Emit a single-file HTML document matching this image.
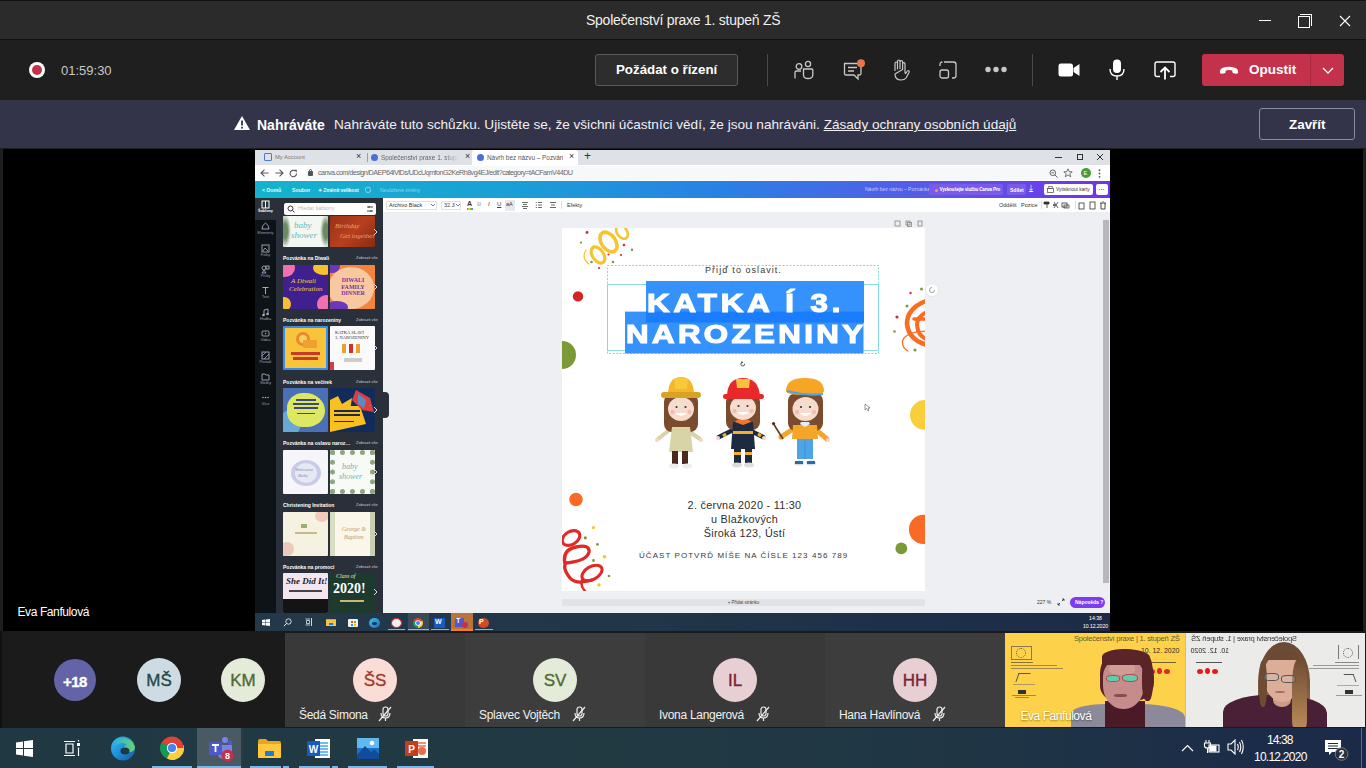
<!DOCTYPE html>
<html><head><meta charset="utf-8">
<style>
*{margin:0;padding:0;box-sizing:border-box}
html,body{width:1366px;height:768px;overflow:hidden;background:#1e1e1e;font-family:"Liberation Sans",sans-serif}
.a{position:absolute}
#title{left:0;top:0;width:1366px;height:40px;background:#2b2b2b;border-top:1px solid #111;border-bottom:1px solid #111}
#tool{left:0;top:40px;width:1366px;height:60px;background:#1f1f1f}
#banner{left:0;top:100px;width:1366px;height:48px;background:#33344a}
#stage{left:3px;top:149px;width:1360px;height:482px;background:#000}
#prow{left:0;top:631px;width:1366px;height:97px;background:#1b1b1b}
#taskbar{left:0;top:728px;width:1366px;height:40px;background:linear-gradient(90deg,#1f3842 0%,#213a42 45%,#1f3545 72%,#1c2d48 90%,#1b2a48 100%)}
.t{white-space:nowrap;color:#fff}
.av{border-radius:50%;display:flex;align-items:center;justify-content:center;font-family:"Liberation Sans",sans-serif;padding-top:2px;-webkit-text-stroke:0.35px currentColor}
.nm{font-size:12px;color:#f0f0f0;letter-spacing:-0.3px}
</style></head><body>
<!-- title bar -->
<div id="title" class="a">
  <div class="a t" style="left:586px;top:11px;font-size:14px;letter-spacing:-0.26px;color:#f0f0f0">Společenství praxe 1. stupeň ZŠ</div>
  <div class="a" style="left:1259px;top:19px;width:12px;height:1px;background:#fff"></div>
  <div class="a" style="left:1300px;top:13px;width:12px;height:12px;border:1px solid #fff;border-left:none;border-bottom:none"></div>
  <div class="a" style="left:1298px;top:15px;width:12px;height:12px;border:1px solid #fff;background:#2b2b2b"></div>
  <svg class="a" style="left:1339px;top:14px" width="12" height="12"><path d="M1 1L11 11M11 1L1 11" stroke="#fff" stroke-width="1.1"/></svg>
</div>
<!-- toolbar -->
<div id="tool" class="a">
  <div class="a" style="left:29px;top:22px;width:16px;height:16px;border-radius:50%;background:#fff"></div>
  <div class="a" style="left:31.8px;top:24.8px;width:10.4px;height:10.4px;border-radius:50%;background:#c4314b"></div>
  <div class="a t" style="left:61px;top:23px;font-size:13px;color:#c8c8c8">01:59:30</div>
  <div class="a" style="left:595px;top:14px;width:143px;height:32px;border:1px solid #5a5a5a;border-radius:3px;background:#2d2d2d"></div>
  <div class="a t" style="left:616px;top:22px;font-size:13.3px;font-weight:bold">Požádat o řízení</div>
  <div class="a" style="left:767px;top:14px;width:1px;height:32px;background:#4a4a4a"></div>
  <div class="a" style="left:1032px;top:14px;width:1px;height:32px;background:#4a4a4a"></div>
  <div class="a" style="left:1202px;top:14px;width:142px;height:32px;border-radius:3px;background:#c4314b"></div>
  <div class="a" style="left:1310px;top:14px;width:1px;height:32px;background:#a92a40"></div>
  <div class="a t" style="left:1249px;top:22px;font-size:13.5px;font-weight:bold">Opustit</div>
  <!-- toolbar icons -->
  <svg class="a" style="left:794px;top:20px" width="20" height="20" viewBox="0 0 20 20"><circle cx="5" cy="6.5" r="2.8" fill="none" stroke="#c8c8c8" stroke-width="1.3"/><circle cx="14" cy="4" r="2.6" fill="none" stroke="#c8c8c8" stroke-width="1.3"/><path d="M1 18.5V12.5Q1 11 2.5 11H7" fill="none" stroke="#c8c8c8" stroke-width="1.3"/><path d="M9.5 9H18Q18.8 9 18.8 10V15Q18.8 18.5 14 18.5Q9.5 18.5 9.5 15Z" fill="none" stroke="#c8c8c8" stroke-width="1.3"/></svg>
  <svg class="a" style="left:843px;top:19px" width="24" height="22" viewBox="0 0 24 22"><path d="M1.5 4.5H16.5Q18 4.5 18 6V14.5Q18 16 16.5 16H15V20L11 16H3Q1.5 16 1.5 14.5Z" fill="none" stroke="#c8c8c8" stroke-width="1.3"/><path d="M5 8.5H14M5 12H11" stroke="#c8c8c8" stroke-width="1.3"/><circle cx="18" cy="4.2" r="4" fill="#e97548"/></svg>
  <svg class="a" style="left:890px;top:19px" width="20" height="22" viewBox="0 0 20 22"><path d="M5 12V4.5Q5 3 6.3 3Q7.5 3 7.5 4.5V10.5M7.5 10V2.5Q7.5 1 8.8 1Q10 1 10 2.5V10M10 10V3Q10 1.6 11.3 1.6Q12.6 1.6 12.6 3V10.5M12.6 10.5V5Q12.6 3.6 13.8 3.6Q15 3.6 15 5V13Q15 15 16 14Q17.5 11.5 18.5 11.5Q19.6 12 19 13.5L16 19Q14.5 21 11 21Q5 21 5 15Z" fill="none" stroke="#c8c8c8" stroke-width="1.2" stroke-linejoin="round"/></svg>
  <svg class="a" style="left:939px;top:21px" width="18" height="18" viewBox="0 0 18 18"><path d="M5 1H14.5Q17 1 17 3.5V14.5Q17 17 14.5 17H13" fill="none" stroke="#c8c8c8" stroke-width="1.3"/><path d="M1 5V3.5Q1 1 3.5 1" fill="none" stroke="#c8c8c8" stroke-width="1.3"/><rect x="1" y="9" width="8.5" height="8" rx="2" fill="none" stroke="#c8c8c8" stroke-width="1.3"/></svg>
  <svg class="a" style="left:985px;top:26px" width="22" height="7" viewBox="0 0 22 7"><circle cx="3" cy="3.5" r="2.7" fill="#c8c8c8"/><circle cx="11" cy="3.5" r="2.7" fill="#c8c8c8"/><circle cx="19" cy="3.5" r="2.7" fill="#c8c8c8"/></svg>
  <svg class="a" style="left:1058px;top:23px" width="22" height="14" viewBox="0 0 22 14"><rect x="0.5" y="0.5" width="14.5" height="13" rx="2.5" fill="#fff"/><path d="M15.5 5L21.5 1V13L15.5 9Z" fill="#fff"/></svg>
  <svg class="a" style="left:1109px;top:19px" width="16" height="22" viewBox="0 0 16 22"><rect x="4" y="0.5" width="8" height="13.5" rx="4" fill="#fff"/><path d="M1 10Q1 17 8 17Q15 17 15 10M8 17V21" fill="none" stroke="#fff" stroke-width="1.4"/></svg>
  <svg class="a" style="left:1154px;top:21px" width="22" height="19" viewBox="0 0 22 19"><path d="M6 15.5H3Q1 15.5 1 13.5V3Q1 1 3 1H19Q21 1 21 3V13.5Q21 15.5 19 15.5H16" fill="none" stroke="#fff" stroke-width="1.4"/><path d="M11 18.5V7M6.5 11L11 6.5L15.5 11" fill="none" stroke="#fff" stroke-width="1.8"/></svg>
  <svg class="a" style="left:1219px;top:26px" width="20" height="9" viewBox="0 0 20 9"><path d="M1 6.5Q0.5 3 4 1.7Q10 -0.3 16 1.7Q19.5 3 19 6.5Q18.8 8 17.3 7.8L14.5 7.3Q13.2 7 13.3 5.5L13.4 4.5Q10 3.6 6.6 4.5L6.7 5.5Q6.8 7 5.5 7.3L2.7 7.8Q1.2 8 1 6.5Z" fill="#fff"/></svg>
  <svg class="a" style="left:1322px;top:27px" width="12" height="7" viewBox="0 0 12 7"><path d="M1 1L6 6L11 1" fill="none" stroke="#fff" stroke-width="1.3"/></svg>

</div>
<!-- banner -->
<div id="banner" class="a">
  <svg class="a" style="left:234px;top:16px" width="16" height="14"><path d="M8 0L16 14H0Z" fill="#fff"/><rect x="7.1" y="4.5" width="1.8" height="5" fill="#33344a"/><rect x="7.1" y="10.8" width="1.8" height="1.8" fill="#33344a"/></svg>
  <div class="a t" style="left:257px;top:17px;font-size:14px;font-weight:bold">Nahráváte</div>
  <div class="a t" style="left:334px;top:17px;font-size:13.6px;color:#f0f0f0">Nahráváte tuto schůzku. Ujistěte se, že všichni účastníci vědí, že jsou nahráváni. <span style="text-decoration:underline">Zásady ochrany osobních údajů</span></div>
  <div class="a" style="left:1259px;top:8px;width:96px;height:32px;border:1px solid #8a8aa0;border-radius:3px"></div>
  <div class="a t" style="left:1289px;top:17px;font-size:13.4px;font-weight:bold">Zavřít</div>
</div>
<!-- stage -->
<div id="stage" class="a">
  <div class="a t" style="left:14.5px;top:456px;font-size:12px;letter-spacing:-0.4px">Eva Fanfulová</div>
</div>
<div id="screen" class="a" style="left:255px;top:150px;width:855px;height:481px;background:#eeeff3;overflow:hidden">
  <!-- chrome tabs -->
  <div class="a" style="left:0;top:0;width:855px;height:15px;background:#dee1e6"></div>
  <div class="a" style="left:217px;top:0;width:106px;height:15px;background:#fff;border-radius:3px 3px 0 0"></div>
  <div class="a" style="left:112px;top:3px;width:1px;height:9px;background:#9aa0a6"></div>
  <div class="a" style="left:9px;top:3px;width:8px;height:8px;border:1.3px solid #4a7bd0;border-radius:1px"></div>
  <div class="a t" style="left:20px;top:3.5px;font-size:5.8px;color:#777">My Account</div>
  <div class="a t" style="left:101px;top:1px;font-size:9px;color:#333">×</div>
  <div class="a" style="left:115.5px;top:4px;width:7px;height:7px;border-radius:50%;background:#4a6fd8"></div>
  <div class="a t" style="left:126px;top:3.5px;width:78px;overflow:hidden;font-size:6.4px;color:#5f6368;-webkit-mask-image:linear-gradient(90deg,#000 80%,transparent)">Společenství praxe 1. stupeň ZŠ</div>
  <div class="a t" style="left:210px;top:1px;font-size:9px;color:#333">×</div>
  <div class="a" style="left:222px;top:4px;width:7px;height:7px;border-radius:50%;background:#4a6fd8"></div>
  <div class="a t" style="left:232px;top:3.5px;width:76px;overflow:hidden;font-size:6.4px;color:#555">Návrh bez názvu – Pozvánka</div>
  <div class="a t" style="left:314px;top:1px;font-size:9px;color:#333">×</div>
  <div class="a t" style="left:329px;top:-1px;font-size:12px;color:#333">+</div>
  <div class="a" style="left:800px;top:7px;width:7px;height:1px;background:#333"></div>
  <div class="a" style="left:822px;top:4px;width:6px;height:6px;border:1px solid #333"></div>
  <svg class="a" style="left:841px;top:3px" width="8" height="8"><path d="M1 1L7 7M7 1L1 7" stroke="#333" stroke-width="1"/></svg>
  <!-- address bar -->
  <div class="a" style="left:0;top:15px;width:855px;height:16px;background:#fff"></div>
  <div class="a" style="left:50px;top:16px;width:790px;height:14px;border-radius:7px;background:#f7f8f9"></div>
  <svg class="a" style="left:5px;top:19px" width="9" height="8"><path d="M8.5 4H1M4.5 0.7L1 4L4.5 7.3" fill="none" stroke="#555" stroke-width="1.1"/></svg>
  <svg class="a" style="left:20px;top:19px" width="9" height="8"><path d="M0.5 4H8M4.5 0.7L8 4L4.5 7.3" fill="none" stroke="#555" stroke-width="1.1"/></svg>
  <svg class="a" style="left:34px;top:18.5px" width="9" height="9"><path d="M7.5 4.5A3.2 3.2 0 1 1 6.3 2" fill="none" stroke="#555" stroke-width="1.1"/><path d="M5 0.8H7.8V3.6Z" fill="#555"/></svg>
  <div class="a" style="left:53px;top:21px;width:5px;height:4.5px;background:#555;border-radius:1px"></div><div class="a" style="left:54px;top:18.5px;width:3px;height:4px;border:0.8px solid #555;border-radius:1.5px 1.5px 0 0"></div>
  <div class="a t" style="left:63px;top:18px;font-size:7.2px;color:#6a6a6a;letter-spacing:-0.55px">canva.com/design/DAEP64iVtDs/UDcUqmfonG2KeRh8vg4EJ/edit?category=tACFamV44DU</div>
  <svg class="a" style="left:794px;top:18.5px" width="9" height="9"><circle cx="3.8" cy="3.8" r="2.8" fill="none" stroke="#555" stroke-width="0.9"/><path d="M5.8 5.8L8.5 8.5M2.5 3.8H5.1" stroke="#555" stroke-width="0.9"/></svg>
  <svg class="a" style="left:808px;top:18px" width="10" height="10"><path d="M5 0.8L6.2 3.7L9.2 3.8L6.8 5.7L7.7 8.8L5 7L2.3 8.8L3.2 5.7L0.8 3.8L3.8 3.7Z" fill="none" stroke="#555" stroke-width="0.8"/></svg>
  <svg class="a" style="left:843px;top:18.5px" width="3" height="9"><circle cx="1.5" cy="1.2" r="0.9" fill="#555"/><circle cx="1.5" cy="4.5" r="0.9" fill="#555"/><circle cx="1.5" cy="7.8" r="0.9" fill="#555"/></svg>
  <div class="a" style="left:825.5px;top:18px;width:10px;height:10px;border-radius:50%;background:#4a9a3a"></div><div class="a t" style="left:828.5px;top:19.5px;font-size:5.5px;color:#fff">E</div>
  <!-- canva header -->
  <div class="a" style="left:0;top:31px;width:855px;height:17px;background:linear-gradient(90deg,#15b3cc 0%,#1a9fd6 30%,#2a80e4 55%,#5a58e8 80%,#7233ea 100%)"></div>
  <div class="a t" style="left:7px;top:37px;font-size:5.2px;color:#e8f8ff;font-weight:bold">&lt; Domů</div>
  <div class="a t" style="left:37px;top:37px;font-size:5.2px;color:#e8f8ff;font-weight:bold">Soubor</div>
  <div class="a t" style="left:63px;top:37px;font-size:5.2px;color:#e8f8ff;font-weight:bold;letter-spacing:-0.15px">✦ Změnit velikost</div><svg class="a" style="left:109px;top:36px" width="8" height="7"><path d="M1.5 4A2.5 2.5 0 0 1 6.5 3M6.5 3.5A2.5 2.5 0 0 1 1.5 4.5" fill="none" stroke="#a8e4f4" stroke-width="0.8"/></svg>
  <div class="a t" style="left:125px;top:37px;font-size:5px;color:#8fd8ec">Neuložené změny</div>
  <div class="a t" style="left:610px;top:36px;font-size:5px;color:#c8d0ff">Návrh bez názvu – Pozvánka</div>
  <div class="a" style="left:674px;top:34px;width:74px;height:11px;border-radius:2px;background:#7a5ae8"></div>
  <div class="a" style="left:679.5px;top:38.5px;width:3px;height:3px;border-radius:50%;background:#f8a030"></div><div class="a t" style="left:684.5px;top:36.5px;font-size:4.6px;letter-spacing:-0.2px;color:#fff;font-weight:bold">Vyzkoušejte službu Canva Pro</div>
  <div class="a" style="left:752px;top:34px;width:19px;height:11px;border-radius:2px;background:#7a5ae8"></div>
  <div class="a t" style="left:755px;top:36.5px;font-size:5px;color:#fff;font-weight:bold">Sdílet</div>
  <div class="a t" style="left:774px;top:33px;font-size:9px;color:#fff">⤓</div>
  <div class="a" style="left:789px;top:34px;width:49px;height:11px;border-radius:2px;background:#fff"></div>
  <svg class="a" style="left:792px;top:36px" width="7" height="7"><rect x="0.5" y="2.5" width="6" height="4" fill="none" stroke="#444" stroke-width="0.7"/><rect x="1.8" y="0.5" width="3.4" height="2" fill="none" stroke="#444" stroke-width="0.6"/></svg><div class="a t" style="left:801px;top:36.5px;font-size:4.8px;color:#333">Vytisknout karty</div>
  <div class="a" style="left:841px;top:34px;width:12px;height:11px;border-radius:2px;background:#fff"></div>
  <div class="a t" style="left:843.5px;top:35.5px;font-size:6px;color:#555;font-weight:bold">···</div>
  <!-- left icon bar -->
  <div class="a" style="left:0;top:48px;width:21px;height:415px;background:#0e1318"></div>
  <div class="a" style="left:0;top:48px;width:21px;height:22px;background:#293039"></div>
  <!-- side panel -->
  <div class="a" style="left:21px;top:48px;width:107px;height:415px;background:#293039"></div>
  <div class="a" style="left:128px;top:242px;width:6px;height:26px;background:#293039;border-radius:0 4px 4px 0"></div>
  <!-- icon bar -->
<svg class="a" style="left:6px;top:50.0px" width="9" height="9"><rect x="1" y="1" width="7" height="7" fill="none" stroke="#fff" stroke-width="1"/><path d="M4.5 1V8" stroke="#fff"/></svg><div class="a t" style="left:0;width:21px;text-align:center;top:59.0px;font-size:3.8px;color:#fff;font-weight:bold">Šablony</div>
<svg class="a" style="left:6px;top:72.0px" width="9" height="9"><path d="M1 7Q1 3 4.5 1Q8 3 8 7Z" fill="none" stroke="#aab" stroke-width="0.9"/></svg><div class="a t" style="left:0;width:21px;text-align:center;top:81.0px;font-size:3.8px;color:#9aa0aa;font-weight:normal">Elementy</div>
<svg class="a" style="left:6px;top:94.0px" width="9" height="9"><rect x="1" y="1" width="7" height="7" fill="none" stroke="#aab" stroke-width="0.9"/><path d="M2 7L4 4L7 7" fill="none" stroke="#aab" stroke-width="0.8"/></svg><div class="a t" style="left:0;width:21px;text-align:center;top:103.0px;font-size:3.8px;color:#9aa0aa;font-weight:normal">Fotky</div>
<svg class="a" style="left:6px;top:115.0px" width="9" height="9"><circle cx="3" cy="3" r="2" fill="none" stroke="#aab" stroke-width="0.9"/><rect x="5" y="1" width="3" height="3" fill="none" stroke="#aab" stroke-width="0.9"/><path d="M1 8L3 5L5 8Z" fill="none" stroke="#aab" stroke-width="0.9"/></svg><div class="a t" style="left:0;width:21px;text-align:center;top:124.0px;font-size:3.8px;color:#9aa0aa;font-weight:normal">Prvky</div>
<svg class="a" style="left:6px;top:135.5px" width="9" height="9"><path d="M1.5 1.5H7.5M4.5 1.5V8" stroke="#aab" stroke-width="1"/></svg><div class="a t" style="left:0;width:21px;text-align:center;top:144.5px;font-size:3.8px;color:#9aa0aa;font-weight:normal">Text</div>
<svg class="a" style="left:6px;top:157.6px" width="9" height="9"><path d="M3 7V2L7 1V6" fill="none" stroke="#aab" stroke-width="0.9"/><circle cx="2.5" cy="7" r="1.3" fill="#aab"/><circle cx="6.5" cy="6" r="1.3" fill="#aab"/></svg><div class="a t" style="left:0;width:21px;text-align:center;top:166.6px;font-size:3.8px;color:#9aa0aa;font-weight:normal">Hudba</div>
<svg class="a" style="left:6px;top:179.0px" width="9" height="9"><rect x="1" y="2" width="7" height="5" rx="1" fill="none" stroke="#aab" stroke-width="0.9"/><path d="M4 3.5L5.5 4.5L4 5.5Z" fill="#aab"/></svg><div class="a t" style="left:0;width:21px;text-align:center;top:188.0px;font-size:3.8px;color:#9aa0aa;font-weight:normal">Videa</div>
<svg class="a" style="left:6px;top:200.5px" width="9" height="9"><rect x="1" y="1" width="7" height="7" fill="none" stroke="#aab" stroke-width="0.9"/><path d="M1 5L5 1M3 8L8 3" stroke="#aab" stroke-width="0.8"/></svg><div class="a t" style="left:0;width:21px;text-align:center;top:209.5px;font-size:3.8px;color:#9aa0aa;font-weight:normal">Pozadí</div>
<svg class="a" style="left:6px;top:222.0px" width="9" height="9"><path d="M1 2H4L5 3H8V8H1Z" fill="none" stroke="#aab" stroke-width="0.9"/></svg><div class="a t" style="left:0;width:21px;text-align:center;top:231.0px;font-size:3.8px;color:#9aa0aa;font-weight:normal">Složky</div>
<svg class="a" style="left:6px;top:243.0px" width="9" height="9"><circle cx="2" cy="4.5" r="0.8" fill="#aab"/><circle cx="4.5" cy="4.5" r="0.8" fill="#aab"/><circle cx="7" cy="4.5" r="0.8" fill="#aab"/></svg><div class="a t" style="left:0;width:21px;text-align:center;top:252.0px;font-size:3.8px;color:#9aa0aa;font-weight:normal">Více</div>
<!-- panel content -->
  <div class="a" style="left:29px;top:53px;width:92px;height:12px;background:#fff;border-radius:2px"></div>
  <svg class="a" style="left:32px;top:55px" width="8" height="8"><circle cx="3.5" cy="3.5" r="2.5" fill="none" stroke="#333" stroke-width="1"/><path d="M5.5 5.5L7.5 7.5" stroke="#333"/></svg>
  <div class="a t" style="left:43px;top:55px;font-size:5.5px;color:#bbb">Hledat šablony</div>
  <svg class="a" style="left:111px;top:55px" width="8" height="8"><path d="M1 2H7M1 6H7M3 1V3M5 5V7" stroke="#333" stroke-width="0.9"/></svg>
<div class="a" style="left:28px;top:66px;width:45px;height:31px;overflow:hidden;border-radius:1px"><div class="a" style="left:0;top:0;width:45px;height:31px;background:#f4f6f2"></div><div class="a" style="left:-4px;top:-2px;width:12px;height:34px;background:radial-gradient(#6a8a60 30%,transparent 70%)"></div><div class="a" style="left:37px;top:-2px;width:12px;height:34px;background:radial-gradient(#6a8a60 30%,transparent 70%)"></div><div class="a t" style="left:11px;top:4px;font-size:9px;color:#6ab8b8;font-style:italic;font-family:'Liberation Serif'">baby<br></div><div class="a t" style="left:8px;top:14px;font-size:9px;color:#6ab8b8;font-style:italic;font-family:'Liberation Serif'">shower</div></div><div class="a" style="left:75px;top:66px;width:45px;height:31px;overflow:hidden;border-radius:1px"><div class="a" style="left:0;top:0;width:45px;height:31px;background:linear-gradient(135deg,#9a3018,#b8401e 50%,#8a2a14)"></div><div class="a t" style="left:5px;top:6px;font-size:7px;color:#e8a070;font-style:italic;font-family:'Liberation Serif'">Birthday</div><div class="a t" style="left:10px;top:16px;font-size:7px;color:#e8a070;font-style:italic;font-family:'Liberation Serif'">Get together</div></div><svg class="a" style="left:118px;top:78px" width="5" height="8"><path d="M1 1L4 4L1 7" fill="none" stroke="#dde" stroke-width="1"/></svg><div class="a t" style="left:28px;top:105px;font-size:5px;font-weight:bold;color:#fff">Pozvánka na Diwali</div><div class="a t" style="left:101px;top:105px;font-size:4px;color:#c8ccd4">Zobrazit vše</div><div class="a" style="left:28px;top:115px;width:45px;height:44px;overflow:hidden;border-radius:1px"><div class="a" style="left:0;top:0;width:45px;height:44px;background:#40208e"></div><div class="a" style="left:-8px;top:-6px;width:20px;height:18px;border-radius:50%;background:#f070b0"></div><div class="a" style="left:30px;top:-4px;width:22px;height:14px;border-radius:50%;background:#f8c030"></div><div class="a" style="left:34px;top:30px;width:18px;height:18px;border-radius:50%;background:#f070b0"></div><div class="a" style="left:-6px;top:32px;width:14px;height:14px;border-radius:50%;background:#f8c030"></div><div class="a t" style="left:8px;top:12px;font-size:7px;color:#f8d040;font-style:italic;font-family:'Liberation Serif'">A Diwali</div><div class="a t" style="left:6px;top:20px;font-size:7px;color:#f8d040;font-style:italic;font-family:'Liberation Serif'">Celebration</div></div><div class="a" style="left:75px;top:115px;width:45px;height:44px;overflow:hidden;border-radius:1px"><div class="a" style="left:0;top:0;width:45px;height:44px;background:#f4843c"></div><div class="a" style="left:-2px;top:2px;width:46px;height:42px;border-radius:50%;background:#f8c8a0"></div><div class="a" style="left:-6px;top:-6px;width:16px;height:14px;border-radius:50%;background:#6a38b8"></div><div class="a" style="left:-4px;top:36px;width:22px;height:12px;border-radius:50%;background:#6a38b8"></div><div class="a t" style="left:9px;top:12px;font-size:6px;font-weight:bold;color:#7a30a0;font-family:'Liberation Serif';line-height:6.5px;text-align:center;white-space:normal;width:28px">DIWALI FAMILY DINNER</div></div><svg class="a" style="left:118px;top:133px" width="5" height="8"><path d="M1 1L4 4L1 7" fill="none" stroke="#dde" stroke-width="1"/></svg><div class="a t" style="left:28px;top:167px;font-size:5px;font-weight:bold;color:#fff">Pozvánka na narozeniny</div><div class="a t" style="left:101px;top:167px;font-size:4px;color:#c8ccd4">Zobrazit vše</div><div class="a" style="left:28px;top:176px;width:45px;height:44px;overflow:hidden;border-radius:1px"><div class="a" style="left:0;top:0;width:45px;height:44px;background:#3a8ee8"></div><div class="a" style="left:2px;top:2px;width:41px;height:40px;background:#f8c43a"></div><div class="a" style="left:13px;top:6px;width:14px;height:14px;border-radius:50%;background:#e88a2a"></div><div class="a" style="left:16px;top:9px;width:8px;height:8px;border-radius:50%;background:#f8d060"></div><div class="a" style="left:20px;top:14px;width:14px;height:8px;background:#f0a030"></div><div class="a" style="left:8px;top:26px;width:29px;height:3px;background:#c83a2a"></div><div class="a" style="left:10px;top:31px;width:25px;height:3px;background:#c83a2a"></div></div><div class="a" style="left:75px;top:176px;width:45px;height:44px;overflow:hidden;border-radius:1px"><div class="a" style="left:0;top:0;width:45px;height:44px;background:#fafafa"></div><div class="a t" style="left:5px;top:4px;font-size:4.5px;color:#333;font-family:'Liberation Serif';line-height:5px">KATKA SLAVÍ<br>3. NAROZENINY</div><div class="a" style="left:12px;top:18px;width:4px;height:9px;background:#e8a030"></div><div class="a" style="left:19px;top:18px;width:4px;height:9px;background:#d03030"></div><div class="a" style="left:26px;top:18px;width:4px;height:9px;background:#f0a030"></div><div class="a" style="left:14px;top:32px;width:18px;height:4px;background:#ccc"></div><div class="a" style="left:0;top:36px;width:4px;height:8px;background:#d04040"></div></div><svg class="a" style="left:118px;top:194px" width="5" height="8"><path d="M1 1L4 4L1 7" fill="none" stroke="#dde" stroke-width="1"/></svg><div class="a t" style="left:28px;top:229px;font-size:5px;font-weight:bold;color:#fff">Pozvánka na večírek</div><div class="a t" style="left:101px;top:229px;font-size:4px;color:#c8ccd4">Zobrazit vše</div><div class="a" style="left:28px;top:238px;width:45px;height:44px;overflow:hidden;border-radius:1px"><div class="a" style="left:0;top:0;width:45px;height:44px;background:#4a70b8"></div><div class="a" style="left:-4px;top:22px;width:22px;height:26px;border-radius:50%;background:#68a8d8"></div><div class="a" style="left:4px;top:5px;width:38px;height:34px;border-radius:45% 55% 50% 45%;background:#dde860"></div><div class="a" style="left:13px;top:11px;width:20px;height:2px;background:#3a4a7a"></div><div class="a" style="left:10px;top:15px;width:26px;height:2px;background:#3a4a7a"></div><div class="a" style="left:11px;top:19px;width:24px;height:2px;background:#3a4a7a"></div><div class="a" style="left:14px;top:25px;width:18px;height:1px;background:#3a4a7a"></div></div><div class="a" style="left:75px;top:238px;width:45px;height:44px;overflow:hidden;border-radius:1px"><div class="a" style="left:0;top:0;width:45px;height:44px;background:#112c5a"></div><svg class="a" style="left:0;top:0" width="45" height="44"><path d="M0 12L8 8L12 16L22 10L20 22L30 26L0 44Z" fill="#f8c020"/><path d="M0 18L30 18L36 36L0 44Z" fill="#f8c020"/><path d="M26 2L40 10L44 24L32 22L22 12Z" fill="#d84040"/><path d="M28 6L36 12L34 20L28 16Z" fill="#5a8ac8"/></svg><div class="a" style="left:4px;top:22px;width:26px;height:2px;background:#1e2850"></div><div class="a" style="left:4px;top:26px;width:26px;height:2px;background:#1e2850"></div><div class="a" style="left:4px;top:33px;width:20px;height:1px;background:#1e2850"></div></div><svg class="a" style="left:118px;top:256px" width="5" height="8"><path d="M1 1L4 4L1 7" fill="none" stroke="#dde" stroke-width="1"/></svg><div class="a t" style="left:28px;top:290px;width:68px;overflow:hidden;text-overflow:ellipsis;font-size:5px;font-weight:bold;color:#fff">Pozvánka na oslavu narozenin miminka</div><div class="a t" style="left:101px;top:290px;font-size:4px;color:#c8ccd4">Zobrazit vše</div><div class="a" style="left:28px;top:300px;width:45px;height:44px;overflow:hidden;border-radius:1px"><div class="a" style="left:0;top:0;width:45px;height:44px;background:#f6f6fa"></div><div class="a" style="left:8px;top:10px;width:30px;height:26px;border-radius:50%;background:#c8cce8"></div><div class="a" style="left:12px;top:13px;width:22px;height:20px;border-radius:50%;background:#e6e8f4"></div><div class="a t" style="left:12px;top:17px;font-size:5px;color:#8088b0;font-style:italic;font-family:'Liberation Serif'">Welcome</div><div class="a t" style="left:15px;top:23px;font-size:5px;color:#8088b0;font-style:italic;font-family:'Liberation Serif'">Baby</div></div><div class="a" style="left:75px;top:300px;width:45px;height:44px;overflow:hidden;border-radius:1px"><div class="a" style="left:0;top:0;width:45px;height:44px;background:#f8faf6"></div><div class="a" style="left:0;top:0;width:45px;height:44px;border:5px dotted #6a8a5a;border-radius:2px;opacity:.75"></div><div class="a t" style="left:12px;top:12px;font-size:8px;color:#6ab8b8;font-style:italic;font-family:'Liberation Serif'">baby</div><div class="a t" style="left:9px;top:22px;font-size:8px;color:#6ab8b8;font-style:italic;font-family:'Liberation Serif'">shower</div></div><svg class="a" style="left:118px;top:318px" width="5" height="8"><path d="M1 1L4 4L1 7" fill="none" stroke="#dde" stroke-width="1"/></svg><div class="a t" style="left:28px;top:352px;font-size:5px;font-weight:bold;color:#fff">Christening Invitation</div><div class="a t" style="left:101px;top:352px;font-size:4px;color:#c8ccd4">Zobrazit vše</div><div class="a" style="left:28px;top:362px;width:45px;height:44px;overflow:hidden;border-radius:1px"><div class="a" style="left:0;top:0;width:45px;height:44px;background:#f6f2e2"></div><div class="a" style="left:32px;top:-2px;width:14px;height:12px;border-radius:50%;background:#f0c0b0;opacity:.8"></div><div class="a" style="left:-3px;top:30px;width:14px;height:14px;border-radius:50%;background:#e8b8a8;opacity:.7"></div><div class="a" style="left:18px;top:12px;width:6px;height:4px;background:#9ab070"></div><div class="a" style="left:12px;top:20px;width:22px;height:2px;background:#c8b890"></div></div><div class="a" style="left:75px;top:362px;width:45px;height:44px;overflow:hidden;border-radius:1px"><div class="a" style="left:0;top:0;width:45px;height:44px;background:#faf6ea"></div><div class="a" style="left:0;top:0;width:5px;height:44px;background:#d8dcc0"></div><div class="a" style="left:40px;top:0;width:5px;height:44px;background:#c8d0b0"></div><div class="a t" style="left:12px;top:14px;font-size:6px;color:#b8a070;font-style:italic;font-family:'Liberation Serif'">George &amp;</div><div class="a t" style="left:14px;top:22px;font-size:6px;color:#b8a070;font-style:italic;font-family:'Liberation Serif'">Baptism</div></div><svg class="a" style="left:118px;top:380px" width="5" height="8"><path d="M1 1L4 4L1 7" fill="none" stroke="#dde" stroke-width="1"/></svg><div class="a t" style="left:28px;top:414px;font-size:5px;font-weight:bold;color:#fff">Pozvánka na promoci</div><div class="a t" style="left:101px;top:414px;font-size:4px;color:#c8ccd4">Zobrazit vše</div><div class="a" style="left:28px;top:423px;width:45px;height:40px;overflow:hidden;border-radius:1px"><div class="a" style="left:0;top:0;width:45px;height:40px;background:#f4e6ee"></div><div class="a t" style="left:3px;top:3px;font-size:9px;font-weight:bold;color:#222;font-style:italic;font-family:'Liberation Serif'">She Did It!</div><div class="a" style="left:6px;top:17px;width:33px;height:2px;background:#444"></div><div class="a" style="left:0;top:26px;width:45px;height:14px;background:#141414"></div></div><div class="a" style="left:75px;top:423px;width:45px;height:40px;overflow:hidden;border-radius:1px"><div class="a" style="left:0;top:0;width:45px;height:40px;background:#1e3a2e"></div><div class="a t" style="left:6px;top:0px;font-size:6px;color:#e8e0c0;font-style:italic;font-family:'Liberation Serif'">Class of</div><div class="a t" style="left:3px;top:8px;font-size:14px;font-weight:bold;color:#fff;font-family:'Liberation Serif'">2020!</div><div class="a" style="left:10px;top:27px;width:24px;height:2px;background:#c8b870"></div></div><svg class="a" style="left:118px;top:438px" width="5" height="8"><path d="M1 1L4 4L1 7" fill="none" stroke="#dde" stroke-width="1"/></svg>
  <!-- editor toolbar -->
  <div class="a" style="left:128px;top:48px;width:727px;height:14px;background:#fff"></div>
  <!-- toolbar items -->
  <div class="a" style="left:131px;top:51px;width:51px;height:9px;border:0.8px solid #e0e0e0;border-radius:1px"></div>
  <div class="a t" style="left:134px;top:52px;font-size:5.5px;color:#333">Archivo Black</div>
  <svg class="a" style="left:176px;top:54px" width="4" height="3"><path d="M0 0L2 2L4 0" fill="none" stroke="#444" stroke-width="0.7"/></svg>
  <div class="a" style="left:186px;top:51px;width:20px;height:9px;border:0.8px solid #e0e0e0;border-radius:1px"></div>
  <div class="a t" style="left:189px;top:52px;font-size:5.5px;color:#444">32.3</div>
  <svg class="a" style="left:201px;top:54px" width="4" height="3"><path d="M0 0L2 2L4 0" fill="none" stroke="#444" stroke-width="0.7"/></svg>
  <div class="a t" style="left:212px;top:50px;font-size:7px;color:#333;font-weight:bold">A</div>
  <div class="a" style="left:211.5px;top:58px;width:6px;height:1.5px;background:linear-gradient(90deg,#f44,#fd0,#4c4,#48f)"></div>
  <div class="a t" style="left:222px;top:51px;font-size:6px;color:#bbb;font-weight:bold">B</div>
  <div class="a t" style="left:233px;top:51px;font-size:6px;color:#333;font-style:italic">I</div>
  <div class="a t" style="left:242px;top:51px;font-size:6px;color:#444;text-decoration:underline">U</div>
  <div class="a" style="left:250px;top:50px;width:10px;height:11px;background:#e8e8ec;border-radius:1px"></div>
  <div class="a t" style="left:251px;top:51px;font-size:5.5px;color:#333">aA</div>
  <svg class="a" style="left:266px;top:51px" width="8" height="8"><path d="M1 1.5H7M2 3.5H6M1 5.5H7M2 7.5H6" stroke="#444" stroke-width="0.8"/></svg>
  <svg class="a" style="left:280px;top:51px" width="8" height="8"><path d="M3 1.5H7M3 4H7M3 6.5H7" stroke="#444" stroke-width="0.8"/><circle cx="1.3" cy="1.5" r="0.6" fill="#444"/><circle cx="1.3" cy="4" r="0.6" fill="#444"/><circle cx="1.3" cy="6.5" r="0.6" fill="#444"/></svg>
  <svg class="a" style="left:294px;top:51px" width="8" height="8"><path d="M1 1.5H7M1 6.5H7M2 4H6" stroke="#444" stroke-width="0.8"/></svg>
  <div class="a" style="left:305.5px;top:51px;width:0.7px;height:8px;background:#ddd"></div>
  <div class="a t" style="left:312px;top:51.5px;font-size:5.5px;color:#333">Efekty</div>
  <div class="a t" style="left:744px;top:51.5px;font-size:5.5px;color:#333">Oddělit</div>
  <div class="a t" style="left:766px;top:51.5px;font-size:5.5px;color:#333">Pozice</div>
  <div class="a" style="left:786px;top:51px;width:0.7px;height:8px;background:#ddd"></div>
  <svg class="a" style="left:788px;top:51px" width="28" height="8"><path d="M1 1H6V3H1ZM4 3V7" stroke="#333" fill="#333" stroke-width="0.8"/><path d="M11 1L15 7M15 1L11 7" stroke="#333" stroke-width="0.8"/><circle cx="11" cy="4" r="1" fill="#333"/><rect x="19" y="2" width="5" height="4" fill="none" stroke="#333" stroke-width="0.8"/><rect x="21" y="4" width="5" height="3" fill="none" stroke="#333" stroke-width="0.7"/></svg>
  <div class="a" style="left:820px;top:51px;width:0.7px;height:8px;background:#ddd"></div>
  <svg class="a" style="left:823px;top:51px" width="30" height="9"><rect x="1" y="2" width="5" height="6" fill="none" stroke="#333" stroke-width="0.8"/><rect x="12" y="1" width="5" height="7" fill="none" stroke="#333" stroke-width="0.8"/><path d="M22 2H28M23 2V8H27V2M24.5 0.7H25.5" fill="none" stroke="#333" stroke-width="0.9"/></svg>
  <!-- above canvas icons -->
  <svg class="a" style="left:639px;top:70px" width="30" height="8"><rect x="1" y="1" width="5" height="5" fill="none" stroke="#777" stroke-width="0.7"/><rect x="12" y="1" width="4" height="4" fill="none" stroke="#777" stroke-width="0.7"/><rect x="13.5" y="2.5" width="4" height="4" fill="none" stroke="#777" stroke-width="0.7"/><rect x="24" y="1" width="4" height="5" fill="none" stroke="#777" stroke-width="0.7"/></svg>
  <!-- rotate btn -->
  <div class="a" style="left:670px;top:133px;width:14px;height:14px;border-radius:50%;background:#fff;border:0.8px solid #e6e6e6"></div>
  <svg class="a" style="left:673px;top:136px" width="8" height="8"><path d="M6.5 4A2.5 2.5 0 1 1 4 1.5" fill="none" stroke="#888" stroke-width="0.8"/></svg>
  <!-- cursor -->
  
  <!-- zoom footer -->
  <div class="a t" style="left:782px;top:449px;font-size:5px;color:#333">227 %</div>
  <svg class="a" style="left:802px;top:448px" width="8" height="8"><path d="M1 7L3 5M7 1L5 3" stroke="#333" stroke-width="0.9"/><path d="M1 5V7H3M5 1H7V3" fill="none" stroke="#333" stroke-width="0.8"/></svg>
  <div class="a" style="left:815px;top:447px;width:35px;height:11px;border-radius:6px;background:#7d3cf0"></div>
  <div class="a t" style="left:820px;top:449px;font-size:5px;color:#fff;font-weight:bold">Nápověda ?</div>
  
  <!-- scrollbar -->
  <div class="a" style="left:848px;top:70px;width:6px;height:363px;background:#b8b8bc"></div>
  <!-- canvas -->
  <div class="a" style="left:307px;top:78px;width:363px;height:363px;background:#fff;overflow:hidden">
  <svg class="a" style="left:0;top:0" width="363" height="363" viewBox="0 0 363 363">
    <!-- yellow loops top-left -->
    <g fill="none" stroke="#f5c431" stroke-linecap="round">
      <ellipse cx="46.5" cy="14" rx="7" ry="11" transform="rotate(-35 46.5 14)" stroke-width="3.6"/>
      <ellipse cx="36" cy="27" rx="5.5" ry="9" transform="rotate(-35 36 27)" stroke-width="3.2"/>
      <ellipse cx="60" cy="4" rx="5" ry="7.5" transform="rotate(-35 60 4)" stroke-width="2.6"/>
      <path d="M27 36Q19 30 24 22" stroke-width="1.2"/>
    </g>
    <g fill="#d42a3a"><circle cx="25" cy="4.5" r="1.4"/><circle cx="62" cy="17" r="1.3"/><circle cx="46.5" cy="26.5" r="1.1"/><circle cx="59" cy="27" r="1.1"/><circle cx="37" cy="40" r="1.1"/></g>
    <g fill="#7f9a3a"><circle cx="19" cy="14.6" r="1.1"/><circle cx="29.5" cy="34" r="1.3"/><circle cx="51" cy="34" r="1.3"/><circle cx="70" cy="21.7" r="1.2"/></g>
    <!-- left dots -->
    <circle cx="16" cy="68.4" r="5.2" fill="#d42424"/>
    <circle cx="0" cy="127" r="14" fill="#7a9a38"/>
    <circle cx="14" cy="271.5" r="6.8" fill="#f86a26"/>
    <!-- right -->
    <circle cx="363" cy="187" r="15" fill="#f8ce3a"/>
    <circle cx="361.5" cy="301.4" r="14.6" fill="#f86a26"/>
    <circle cx="339.3" cy="320.4" r="5.9" fill="#7a9a38"/>
    <!-- orange ribbon right -->
    <g fill="none" stroke="#fb6b22" stroke-linecap="round">
      <path d="M370 71Q345 78 345 96Q347 114 370 118" stroke-width="4.6"/>
      <path d="M365 91H352" stroke-width="3.6"/>
      <path d="M368 83Q355 87 355 97Q356 110 368 112" stroke-width="4" />
      <path d="M364 103Q343 104 340.5 113Q340 120 346 123" stroke-width="1.3"/>
    </g>
    <g fill="#7f9a3a"><circle cx="359.5" cy="61" r="1.5"/><circle cx="345" cy="78" r="1.5"/><circle cx="332.5" cy="103.5" r="1.3"/><circle cx="353" cy="122" r="1.6"/></g>
    <g fill="#d42a3a"><circle cx="348.5" cy="65" r="1.2"/><circle cx="335" cy="89" r="1.6"/></g>
    <!-- red ribbon bottom-left -->
    <g fill="none" stroke="#df2a26" stroke-linecap="round">
      <ellipse cx="9" cy="310" rx="9.5" ry="6.5" transform="rotate(-32 9 310)" stroke-width="3.2"/>
      <path d="M3 336Q0 322 14 319Q28 316 27 324Q25 333 4 335Q0 340 8 350Q14 357 30 352" stroke-width="3.4"/>
      <ellipse cx="30" cy="345" rx="11" ry="6.5" transform="rotate(-30 30 345)" stroke-width="3"/>
      <path d="M20 352Q18 358 23 363" stroke-width="2.4"/>
    </g>
    <g fill="#7f9a3a"><circle cx="23.3" cy="309.8" r="1.6"/><circle cx="35.4" cy="316.4" r="1.4"/><circle cx="31.5" cy="332.5" r="1.4"/><circle cx="47" cy="348" r="1.3"/></g>
    <g fill="#f5c431"><circle cx="31.4" cy="299.6" r="1.6"/><circle cx="42.6" cy="328.7" r="1.8"/><circle cx="37" cy="357" r="1.7"/></g>
    <!-- selection boxes -->
    <rect x="45.5" y="37.5" width="271" height="88" fill="none" stroke="#5bd0d8" stroke-width="0.8" stroke-dasharray="2 1.5"/>
    <rect x="45.5" y="56.5" width="271" height="66" fill="none" stroke="#7fd8e0" stroke-width="0.9"/>
    <!-- highlight -->
    <rect x="84" y="53" width="218" height="41.5" fill="#3592fd"/>
    <rect x="63" y="83.6" width="238.5" height="41.8" fill="#3592fd"/>
    <rect x="84" y="83.6" width="218" height="11" fill="#1a7dfd"/>
  </svg>
  <div class="a t" style="left:143px;top:37px;font-size:9px;letter-spacing:1.05px;color:#383838">Přijď to oslavit.</div>
  <div class="a t" style="left:85px;top:60px;font-size:26px;font-weight:bold;letter-spacing:3.3px;color:#fff;-webkit-text-stroke:1.2px #fff;transform:scaleX(1.2);transform-origin:0 0">KATKA Í 3.</div>
  <div class="a t" style="left:64px;top:91px;font-size:26px;font-weight:bold;letter-spacing:2.85px;color:#fff;-webkit-text-stroke:1.2px #fff;transform:scaleX(1.2);transform-origin:0 0">NAROZENINY</div>
  <!-- texts -->
  <div class="a t" style="left:1px;top:270px;width:363px;text-align:center;font-size:10.8px;letter-spacing:0.3px;color:#2e2e2e;line-height:14.2px;white-space:normal">2. června 2020 - 11:30<br>u Blažkových<br>Široká 123, Ústí</div>
  <div class="a t" style="left:77px;top:323px;font-size:8px;letter-spacing:1.05px;color:#3a3a3a">ÚČAST POTVRĎ MÍŠE NA ČÍSLE 123 456 789</div>
  <svg class="a" style="left:178px;top:133px" width="6" height="6"><path d="M4.6 2.8A1.9 1.9 0 1 1 2.5 1.2" fill="none" stroke="#444" stroke-width="0.9"/><path d="M1.2 0.3L3.2 1.2L1.6 2.6Z" fill="#444"/></svg>
  <svg class="a" style="left:302px;top:175px" width="7" height="9"><path d="M1 1L1 7L2.5 5.5L4 8L5 7.5L4 5H6Z" fill="#fff" stroke="#555" stroke-width="0.6"/></svg>
  <!-- girls -->
  <svg class="a" style="left:98px;top:149px;overflow:visible" width="190" height="95" viewBox="0 0 190 95">
    <!-- girl 1 -->
    <g transform="translate(0,0)">
      <path d="M8 54L-2 62M28 54L40 62" stroke="#d8d4a8" stroke-width="4" stroke-linecap="round"/>
      <circle cx="-3" cy="63" r="2" fill="#f3d6c8"/><circle cx="41" cy="63" r="2" fill="#f3d6c8"/>
      <rect x="4" y="17" width="34" height="38" rx="8" fill="#7b4b2e"/>
      <path d="M12 50H30L33 75H9Z" fill="#d8d4a8"/>
      <rect x="12" y="74" width="6" height="13" fill="#4a2a1e"/><rect x="22" y="74" width="6" height="13" fill="#4a2a1e"/>
      <ellipse cx="14" cy="89" rx="5" ry="2.5" fill="#eee"/><ellipse cx="27" cy="89" rx="5" ry="2.5" fill="#eee"/>
      <ellipse cx="21" cy="32" rx="13" ry="12" fill="#f6dccc"/>
      <path d="M15 36Q21 42 27 36Z" fill="#fff"/><circle cx="16.5" cy="30" r="1.1" fill="#2a3a3a"/><circle cx="25.5" cy="30" r="1.1" fill="#2a3a3a"/><circle cx="12.5" cy="35" r="2.2" fill="#f0b0a8" opacity=".7"/><circle cx="29.5" cy="35" r="2.2" fill="#f0b0a8" opacity=".7"/>
      <path d="M8 18Q8 0 21 0Q34 0 34 18Z" fill="#f2b72a"/>
      <path d="M14 2Q21 -1 28 2L27 12H15Z" fill="#f8c93a"/>
      <rect x="1" y="15" width="40" height="6" rx="3" fill="#d9a222"/>
    </g>
    <!-- girl 2 -->
    <g transform="translate(63,0)">
      <path d="M8 54L-4 60M28 54L40 60" stroke="#1e2a40" stroke-width="4.5" stroke-linecap="round"/>
      <path d="M3 57L0 59M35 57L38 59" stroke="#f5b02a" stroke-width="3"/>
      <circle cx="-5" cy="61" r="2" fill="#f3d6c8"/><circle cx="41" cy="61" r="2" fill="#f3d6c8"/>
      <rect x="3" y="17" width="34" height="36" rx="8" fill="#7b4b2e"/>
      <path d="M10 45H30L32 72H8Z" fill="#1e2a40"/>
      <rect x="10" y="54" width="20" height="3" fill="#f5b02a"/>
      <path d="M12 45L20 48L28 45L26 43H14Z" fill="#f5732a"/>
      <rect x="11" y="72" width="7" height="14" fill="#1e2a40"/><rect x="22" y="72" width="7" height="14" fill="#1e2a40"/>
      <rect x="11" y="75" width="7" height="3" fill="#f5b02a"/><rect x="22" y="75" width="7" height="3" fill="#f5b02a"/>
      <ellipse cx="14" cy="88" rx="5" ry="2.5" fill="#ddd"/><ellipse cx="26" cy="88" rx="5" ry="2.5" fill="#ddd"/>
      <ellipse cx="20" cy="31" rx="13" ry="12" fill="#f6dccc"/>
      <path d="M14 35Q20 41 26 35Z" fill="#fff"/><circle cx="15.5" cy="29" r="1.1" fill="#2a3a3a"/><circle cx="24.5" cy="29" r="1.1" fill="#2a3a3a"/><circle cx="11.5" cy="34" r="2.2" fill="#f0b0a8" opacity=".7"/><circle cx="28.5" cy="34" r="2.2" fill="#f0b0a8" opacity=".7"/>
      <path d="M4 20Q4 1 20 1Q36 1 37 20Z" fill="#e8282a"/>
      <path d="M13 2H27L26 11H14Z" fill="#f8c33a"/>
      <rect x="0" y="17" width="41" height="5" rx="2.5" fill="#e8282a"/>
    </g>
    <!-- girl 3 -->
    <g transform="translate(125,0)">
      <path d="M8 52L-4 60M30 52L42 62" stroke="#f5a527" stroke-width="5" stroke-linecap="round"/>
      <circle cx="43" cy="63" r="2" fill="#f3d6c8"/>
      <path d="M-12 46L-2 62" stroke="#6a3a20" stroke-width="1.6"/>
      <circle cx="-11.5" cy="46.5" r="1.6" fill="#5a2a18"/>
      <rect x="3" y="16" width="35" height="38" rx="8" fill="#7b4b2e"/>
      <path d="M8 48H32L33 62H7Z" fill="#f5a527"/>
      <rect x="12" y="62" width="16" height="20" fill="#4ea5e6"/>
      <rect x="19.5" y="64" width="1" height="18" fill="#3a8fd0"/>
      <ellipse cx="14" cy="86" rx="5" ry="2.5" fill="#ddd"/><ellipse cx="26" cy="86" rx="5" ry="2.5" fill="#ddd"/>
      <path d="M10 84H18V87H10ZM22 84H30V87H22Z" fill="#2a6ab8"/>
      <ellipse cx="20.5" cy="32" rx="13" ry="12" fill="#f6dccc"/>
      <path d="M14.5 36Q20.5 42 26.5 36Z" fill="#fff"/><circle cx="16" cy="30" r="1.1" fill="#2a3a3a"/><circle cx="25" cy="30" r="1.1" fill="#2a3a3a"/><circle cx="12" cy="35" r="2.2" fill="#f0b0a8" opacity=".7"/><circle cx="29" cy="35" r="2.2" fill="#f0b0a8" opacity=".7"/>
      <path d="M15 47L20 50L25 47L24 45H16Z" fill="#dfefff"/>
      <path d="M1 14Q1 1 20 1Q39 1 39 14Q39 18 20 18Q1 18 1 14Z" fill="#f6a524"/>
      <path d="M2 14Q20 19 38 17" stroke="#4ea5e6" stroke-width="2.2" fill="none"/>
    </g>
  </svg>
  </div>
  <div class="a" style="left:307px;top:448.5px;width:363px;height:7.5px;background:#e2e3e8"></div>
  <div class="a t" style="left:307px;top:449.5px;width:363px;text-align:center;font-size:4.5px;color:#444">+ Přidat stránku</div>
  <!-- shared taskbar -->
  <div class="a" style="left:0;top:463px;width:855px;height:18px;background:linear-gradient(90deg,#23394a,#213649 45%,#1c2b48 100%)"></div>
  <svg class="a" style="left:7px;top:469px" width="8" height="7"><path d="M0 1L3.5 0.5V3.3H0ZM4 0.4L8 0V3.3H4ZM0 3.8H3.5V6.5L0 6ZM4 3.8H8V7L4 6.6Z" fill="#fff"/></svg>
  <svg class="a" style="left:28px;top:468px" width="9" height="9"><circle cx="5.5" cy="3.5" r="2.7" fill="none" stroke="#fff" stroke-width="0.8"/><path d="M3.5 5.5L0.8 8.2" stroke="#fff" stroke-width="0.9"/></svg>
  <svg class="a" style="left:50px;top:468px" width="8" height="8"><path d="M0.5 1H5M0.5 7H5M1.5 2.5H4.5V5.5H1.5Z" fill="none" stroke="#fff" stroke-width="0.7"/><path d="M6.5 0V8" stroke="#fff" stroke-width="0.8"/></svg>
  <div class="a" style="left:71px;top:469px;width:10px;height:7px;background:#f5c242;border-top:1.5px solid #e0a020"></div>
  <div class="a" style="left:74px;top:473px;width:4px;height:2px;background:#2a7ad0"></div>
  <div class="a" style="left:93px;top:469px;width:10px;height:8px;background:#f0f0f0;border-radius:1px"></div>
  <div class="a" style="left:96px;top:471px;width:2px;height:2px;background:#f25022"></div><div class="a" style="left:98.5px;top:471px;width:2px;height:2px;background:#7fba00"></div><div class="a" style="left:96px;top:473.5px;width:2px;height:2px;background:#00a4ef"></div><div class="a" style="left:98.5px;top:473.5px;width:2px;height:2px;background:#ffb900"></div>
  <div class="a" style="left:114px;top:468px;width:11px;height:10px;border-radius:50%;background:linear-gradient(135deg,#3ac0f0,#1a70c8)"></div>
  <div class="a" style="left:117px;top:472px;width:5px;height:3px;border-radius:50%;background:#1a2a3a"></div>
  <div class="a" style="left:136px;top:468px;width:11px;height:10px;border-radius:50%;background:#f0f0f0;border:1.5px solid #d03030"></div>
  <div class="a" style="left:133px;top:479px;width:17px;height:1px;background:#76b9ed"></div>
  <div class="a" style="left:153px;top:463px;width:21px;height:18px;background:#3a4a5a"></div>
  <div class="a" style="left:158px;top:468px;width:10px;height:10px;border-radius:50%;background:conic-gradient(from -60deg,#db4437 0 120deg,#ffcd40 120deg 240deg,#0f9d58 240deg 360deg)"></div>
  <div class="a" style="left:161px;top:471px;width:4px;height:4px;border-radius:50%;background:#4285f4;box-shadow:0 0 0 0.8px #fff"></div>
  <div class="a" style="left:153px;top:479px;width:21px;height:1px;background:#76b9ed"></div>
  <div class="a" style="left:179px;top:468px;width:11px;height:10px;background:#185abd"></div>
  <div class="a t" style="left:180px;top:468px;font-size:7px;font-weight:bold;color:#fff">W</div>
  <div class="a" style="left:176px;top:479px;width:18px;height:1px;background:#76b9ed"></div>
  <div class="a" style="left:196px;top:463px;width:22px;height:18px;background:#b8743a"></div>
  <div class="a" style="left:200px;top:468px;width:9px;height:9px;background:#5059c9"></div>
  <div class="a t" style="left:201px;top:467px;font-size:7px;font-weight:bold;color:#fff">T</div>
  <div class="a" style="left:207px;top:472px;width:6px;height:6px;border-radius:50%;background:#c4314b"></div>
  <div class="a" style="left:196px;top:479px;width:22px;height:2px;background:#f08030"></div>
  <div class="a" style="left:223px;top:468px;width:11px;height:10px;border-radius:50%;background:#d04a24"></div>
  <div class="a t" style="left:224px;top:468px;font-size:7px;font-weight:bold;color:#fff">P</div>
  <div class="a" style="left:220px;top:479px;width:18px;height:1px;background:#76b9ed"></div>
  <div class="a t" style="left:834px;top:465px;font-size:5.2px;color:#fff">14:38</div>
  <div class="a t" style="left:828px;top:473px;font-size:5.2px;color:#fff;letter-spacing:-0.1px">10.12.2020</div>
</div>
<!-- participants row -->
<div id="prow" class="a">
  <div class="a" style="left:0;top:0;width:2px;height:97px;background:#111"></div>
  <div class="a av" style="left:54px;top:28px;width:42px;height:42px;background:#6264a7;color:#fff;font-weight:bold;font-size:15px;letter-spacing:-0.5px">+18</div>
  <div class="a av" style="left:137px;top:27px;width:44px;height:44px;background:#cfdbe2;color:#1f4a4a;font-size:17px">MŠ</div>
  <div class="a av" style="left:221px;top:27px;width:44px;height:44px;background:#e4ebd9;color:#4e6a34;font-size:17px">KM</div>
  <div class="a" style="left:285px;top:2px;width:180px;height:94px;background:#393939"></div>
  <div class="a" style="left:465px;top:2px;width:180px;height:94px;background:#3d3d3d"></div>
  <div class="a" style="left:645px;top:2px;width:180px;height:94px;background:#393939"></div>
  <div class="a" style="left:825px;top:2px;width:180px;height:94px;background:#3d3d3d"></div>
  <div class="a av" style="left:353px;top:27px;width:44px;height:44px;background:#fbddd8;color:#9e3c2e;font-size:17px">ŠS</div>
  <div class="a av" style="left:533px;top:27px;width:44px;height:44px;background:#e4ebd9;color:#4e6a34;font-size:17px">SV</div>
  <div class="a av" style="left:713px;top:27px;width:44px;height:44px;background:#e8cfd3;color:#7a2335;font-size:17px">IL</div>
  <div class="a av" style="left:893px;top:27px;width:44px;height:44px;background:#e8cfd3;color:#7a2335;font-size:17px">HH</div>
  <div class="a t nm" style="left:299px;top:77px">Šedá Simona</div>
  <div class="a t nm" style="left:479px;top:77px">Splavec Vojtěch</div>
  <div class="a t nm" style="left:659px;top:77px">Ivona Langerová</div>
  <div class="a t nm" style="left:839px;top:77px">Hana Havlínová</div>
  <svg class="a mo" style="left:378px;top:75px" width="14" height="16"><rect x="5" y="1" width="5" height="9" rx="2.5" fill="none" stroke="#eee" stroke-width="1.2"/><path d="M3 7Q3 12 7.5 12Q12 12 12 7M7.5 12V15M1 15L13 1" fill="none" stroke="#eee" stroke-width="1.2"/></svg>
  <svg class="a mo" style="left:572px;top:75px" width="14" height="16"><rect x="5" y="1" width="5" height="9" rx="2.5" fill="none" stroke="#eee" stroke-width="1.2"/><path d="M3 7Q3 12 7.5 12Q12 12 12 7M7.5 12V15M1 15L13 1" fill="none" stroke="#eee" stroke-width="1.2"/></svg>
  <svg class="a mo" style="left:756px;top:75px" width="14" height="16"><rect x="5" y="1" width="5" height="9" rx="2.5" fill="none" stroke="#eee" stroke-width="1.2"/><path d="M3 7Q3 12 7.5 12Q12 12 12 7M7.5 12V15M1 15L13 1" fill="none" stroke="#eee" stroke-width="1.2"/></svg>
  <svg class="a mo" style="left:932px;top:75px" width="14" height="16"><rect x="5" y="1" width="5" height="9" rx="2.5" fill="none" stroke="#eee" stroke-width="1.2"/><path d="M3 7Q3 12 7.5 12Q12 12 12 7M7.5 12V15M1 15L13 1" fill="none" stroke="#eee" stroke-width="1.2"/></svg>
  <!-- video tiles -->
  <div class="a" style="left:1005px;top:2px;width:180px;height:94px;background:#fdd24a;overflow:hidden">
    <div class="a t" style="left:69px;top:0.5px;font-size:7.6px;color:#6a5830;letter-spacing:-0.25px">Společenství praxe | 1. stupeň ZŠ</div>
    <div class="a t" style="left:136px;top:13.5px;font-size:7px;color:#2a2a2a;letter-spacing:-0.05px">10. 12. 2020</div>
    <div class="a" style="left:6px;top:13px;width:21px;height:14px;border:0.8px solid #8a7a50"></div>
    <div class="a" style="left:11px;top:15px;width:10px;height:10px;border-radius:50%;border:1px dotted #6a5a30"></div>
    <div class="a" style="left:6px;top:29px;width:22px;height:1px;background:#8a7040"></div>
    <div class="a" style="left:6px;top:32px;width:46px;height:1px;background:#a08850"></div>
    <div class="a" style="left:6px;top:35px;width:52px;height:1px;background:#a08850"></div>
    <div class="a" style="left:12px;top:40px;width:12px;height:9px;border-left:1px solid #555;border-top:1px solid #555;transform:skewX(-20deg)"></div>
    <div class="a" style="left:8px;top:51px;width:22px;height:1px;background:#b09860"></div>
    <div class="a" style="left:13px;top:57px;width:8px;height:4px;background:#333"></div>
    <div class="a" style="left:7px;top:62px;width:24px;height:1px;background:#a08850"></div>
    <div class="a" style="left:10px;top:64px;width:14px;height:1px;background:#a08850"></div>
    <div class="a" style="left:145px;top:29px;width:26px;height:1px;background:#7a6030"></div>
    <div class="a" style="left:144px;top:36px;width:6px;height:5px;border-radius:50%;background:#e02828"></div>
    <div class="a" style="left:152px;top:35px;width:5px;height:6px;border-radius:50% 50% 40% 40%;background:#e02828"></div>
    <div class="a" style="left:159px;top:36px;width:6px;height:5px;border-radius:50%;background:#e02828"></div>
    <!-- person 1 -->
    <div class="a" style="left:66px;top:71px;width:114px;height:32px;border-radius:30% 40% 0 0;background:#8c8a9a"></div>
    <div class="a" style="left:100px;top:68px;width:40px;height:30px;background:#4a1a26"></div>
    <div class="a" style="left:95px;top:16px;width:54px;height:52px;border-radius:46% 54% 35% 30%;background:#5a2428"></div>
    <div class="a" style="left:98px;top:27px;width:41px;height:49px;border-radius:35% 35% 48% 48%;background:#c68c8c"></div>
    <div class="a" style="left:104px;top:30px;width:26px;height:12px;border-radius:40%;background:#d4a098;opacity:.8"></div>
    <div class="a" style="left:97px;top:16px;width:48px;height:16px;border-radius:50% 55% 10% 10%;background:#5a2428"></div>
    <div class="a" style="left:137px;top:24px;width:11px;height:44px;border-radius:40%;background:#5a2428"></div>
    <div class="a" style="left:101px;top:42px;width:14px;height:7px;border-radius:40%;background:#5ccfb0;border:1px solid #c04848"></div>
    <div class="a" style="left:117px;top:41px;width:16px;height:8px;border-radius:40%;background:#5ccfb0;border:1px solid #c04848"></div>
    <div class="a" style="left:109px;top:61px;width:13px;height:3px;border-radius:40%;background:#8a4a50"></div>
    <div class="a t" style="left:15.5px;top:75.5px;font-size:12px;color:#fff;letter-spacing:-0.45px;text-shadow:0 1px 2px rgba(0,0,0,.45)">Eva Fanfulová</div>
  </div>
  <div class="a" style="left:1185px;top:2px;width:180px;height:94px;background:#ebecea;overflow:hidden">
    <div class="a" style="left:0;top:0;width:1px;height:94px;background:#e8c040"></div>
    <div class="a t" style="left:6px;top:0.5px;width:106px;font-size:7.6px;color:#333;letter-spacing:-0.25px;transform:scaleX(-1)">Společenství praxe | 1. stupeň ZŠ</div>
    <div class="a t" style="left:8px;top:13.5px;width:36px;font-size:7px;color:#222;letter-spacing:-0.05px;transform:scaleX(-1)">10. 12. 2020</div>
    <div class="a" style="left:153px;top:12px;width:1px;height:14px;background:#777"></div>
    <div class="a" style="left:173px;top:12px;width:1px;height:14px;background:#777"></div>
    <div class="a" style="left:158px;top:15px;width:10px;height:10px;border-radius:50%;border:1px dotted #555"></div>
    <div class="a" style="left:150px;top:29px;width:24px;height:1px;background:#888"></div>
    <div class="a" style="left:128px;top:32px;width:46px;height:1px;background:#999"></div>
    <div class="a" style="left:124px;top:35px;width:50px;height:1px;background:#999"></div>
    <div class="a" style="left:160px;top:41px;width:10px;height:8px;border-right:1px solid #555;border-top:1px solid #555;transform:skewX(20deg)"></div>
    <div class="a" style="left:152px;top:52px;width:22px;height:1px;background:#aaa"></div>
    <div class="a" style="left:160px;top:57px;width:8px;height:4px;background:#333"></div>
    <div class="a" style="left:151px;top:62px;width:26px;height:1px;background:#999"></div>
    <div class="a" style="left:11px;top:29px;width:26px;height:1px;background:#555"></div>
    <div class="a" style="left:12px;top:36px;width:6px;height:5px;border-radius:50%;background:#e81818"></div>
    <div class="a" style="left:20px;top:35px;width:5px;height:6px;border-radius:50%;background:#e81818"></div>
    <div class="a" style="left:27px;top:36px;width:6px;height:5px;border-radius:50%;background:#e81818"></div>
    <!-- person 2 -->
    <div class="a" style="left:73px;top:9px;width:52px;height:80px;border-radius:50% 50% 20% 20%;background:linear-gradient(180deg,#6a4a34,#7a5438 50%,#a07850)"></div>
    <div class="a" style="left:38px;top:62px;width:104px;height:40px;border-radius:42% 45% 0 0;background:#4a2036"></div>
    <div class="a" style="left:88px;top:60px;width:18px;height:14px;border-radius:0 0 50% 50%;background:#cc9c86"></div>
    <div class="a" style="left:79px;top:20px;width:37px;height:49px;border-radius:45% 45% 50% 50%;background:#dcae98"></div>
    <div class="a" style="left:82px;top:18px;width:32px;height:9px;border-radius:50% 50% 0 0;background:#6a4a34"></div>
    <div class="a" style="left:107px;top:26px;width:15px;height:68px;border-radius:40% 30% 10% 10%;background:linear-gradient(180deg,#6e4c34,#9a7048 60%,#b88a58)"></div>
    <div class="a" style="left:74px;top:28px;width:8px;height:46px;border-radius:40%;background:#6e4c34"></div>
    <div class="a" style="left:79px;top:40px;width:15px;height:8px;border-radius:35%;border:1px solid #555;background:rgba(200,200,200,.25)"></div>
    <div class="a" style="left:96px;top:42px;width:15px;height:8px;border-radius:35%;border:1px solid #555;background:rgba(200,200,200,.25)"></div>
    <div class="a" style="left:90px;top:58px;width:10px;height:2px;border-radius:40%;background:#a86a60"></div>
  </div>
</div>
<!-- taskbar -->
<div id="taskbar" class="a">
  <!-- windows logo -->
  <svg class="a" style="left:16px;top:12px" width="17" height="17"><path d="M0 2.4L7 1.4V8H0ZM8 1.2L17 0V8H8ZM0 9H7V15.6L0 14.6ZM8 9H17V17L8 15.8Z" fill="#fff"/></svg>
  <!-- task view -->
  <svg class="a" style="left:63px;top:12px" width="18" height="17"><path d="M1 1.5H12M1 15.5H12M3 4H10V13H3Z" fill="none" stroke="#fff" stroke-width="1.2"/><rect x="14" y="3" width="3" height="3" fill="#fff"/><path d="M15.5 0V1.5M15.5 7.5V16" stroke="#fff" stroke-width="1.2"/></svg>
  <!-- edge -->
  <svg class="a" style="left:110px;top:8px" width="26" height="25" viewBox="0 0 26 25"><defs><linearGradient id="eg" x1="0" y1="0" x2="1" y2="1"><stop offset="0" stop-color="#35c1f1"/><stop offset=".5" stop-color="#1f8fd8"/><stop offset="1" stop-color="#0c59a4"/></linearGradient><linearGradient id="eg2" x1="0" y1="0" x2="1" y2="0"><stop offset="0" stop-color="#2bb0e8"/><stop offset="1" stop-color="#66d36e"/></linearGradient></defs><circle cx="13" cy="12.5" r="12" fill="url(#eg)"/><path d="M3 9Q6 2 14 2Q23 3 25 11Q25 16 19 16Q14 16 14 12Q14 9 17 9Q12 5 7 9Z" fill="url(#eg2)"/><ellipse cx="15" cy="15" rx="4.5" ry="3.5" fill="#1f3842"/></svg>
  <!-- chrome -->
  <svg class="a" style="left:160px;top:8px" width="24" height="24" viewBox="0 0 24 24"><circle cx="12" cy="12" r="11.5" fill="#db4437"/><path d="M12 12L1.5 6.5A11.5 11.5 0 0 0 7 22.5Z" fill="#0f9d58"/><path d="M12 12L7 22.5A11.5 11.5 0 0 0 23.5 9Z" fill="#ffcd40"/><path d="M12 12H23.5A11.5 11.5 0 0 0 23 8.5L12 7Z" fill="#db4437"/><circle cx="12" cy="12" r="5.2" fill="#fff"/><circle cx="12" cy="12" r="4.1" fill="#4285f4"/></svg>
  <div class="a" style="left:152px;top:38px;width:40px;height:2px;background:#76b9ed"></div>
  <!-- teams (active) -->
  <div class="a" style="left:197px;top:0;width:44px;height:40px;background:#4a5a62"></div>
  <div class="a" style="left:241px;top:0;width:2px;height:40px;background:#2a3a42"></div>
  <div class="a" style="left:197px;top:38px;width:44px;height:2px;background:#76b9ed"></div>
  <svg class="a" style="left:206px;top:8px" width="28" height="26" viewBox="0 0 28 26"><circle cx="19" cy="4" r="3" fill="#7b83eb"/><circle cx="24" cy="7" r="2.4" fill="#5059c9"/><path d="M12 9H26V18Q26 23 19 23Q12 23 12 18Z" fill="#7b83eb"/><rect x="3" y="6" width="13" height="13" rx="1.5" fill="#5059c9"/><path d="M6 9H13M9.5 9V16" stroke="#fff" stroke-width="1.8"/><circle cx="21.5" cy="19.5" r="6" fill="#c4314b"/><text x="21.5" y="23" font-size="9" fill="#fff" text-anchor="middle" font-family="Liberation Sans" font-weight="bold">8</text></svg>
  <!-- explorer -->
  <svg class="a" style="left:258px;top:11px" width="23" height="19" viewBox="0 0 23 19"><path d="M0 2Q0 0 2 0H8L10 2H21Q23 2 23 4V17Q23 19 21 19H2Q0 19 0 17Z" fill="#e8a521"/><rect x="0" y="5" width="23" height="14" rx="1" fill="#ffc83d"/><rect x="7" y="12" width="9" height="5" fill="#1f7ad8"/></svg>
  <div class="a" style="left:250px;top:38px;width:31px;height:2px;background:#76b9ed"></div>
  <div class="a" style="left:283px;top:38px;width:6px;height:2px;background:#76b9ed"></div>
  <!-- word -->
  <svg class="a" style="left:307px;top:10px" width="24" height="21" viewBox="0 0 24 21"><rect x="8" y="1" width="15" height="19" fill="#fff"/><path d="M11 5H21M11 8H21M11 11H21M11 14H21M11 17H21" stroke="#41a5ee" stroke-width="1.4"/><rect x="0" y="3" width="13" height="15" fill="#185abd"/><text x="6.5" y="15" font-size="10" fill="#fff" text-anchor="middle" font-family="Liberation Sans" font-weight="bold">W</text></svg>
  <div class="a" style="left:299px;top:38px;width:31px;height:2px;background:#76b9ed"></div>
  <div class="a" style="left:332px;top:38px;width:6px;height:2px;background:#76b9ed"></div>
  <!-- photos -->
  <svg class="a" style="left:357px;top:10px" width="22" height="21" viewBox="0 0 22 21"><rect x="0" y="0" width="22" height="21" fill="#1d6fc7"/><rect x="0" y="0" width="22" height="10" fill="#5fb8f0"/><path d="M0 17L8 8L14 14L17 11L22 16V21H0Z" fill="#0f4c9a"/><circle cx="15" cy="5" r="2.3" fill="#fff"/></svg>
  <div class="a" style="left:348px;top:38px;width:39px;height:2px;background:#76b9ed"></div>
  <!-- powerpoint -->
  <svg class="a" style="left:405px;top:10px" width="24" height="21" viewBox="0 0 24 21"><rect x="8" y="1" width="15" height="19" fill="#fff"/><path d="M13 5H21M13 8H21" stroke="#ed6c47" stroke-width="1.4"/><circle cx="17" cy="13" r="4" fill="#ed6c47"/><rect x="0" y="3" width="13" height="15" fill="#c43e1c"/><text x="6.5" y="15" font-size="10" fill="#fff" text-anchor="middle" font-family="Liberation Sans" font-weight="bold">P</text></svg>
  <div class="a" style="left:397px;top:38px;width:37px;height:2px;background:#76b9ed"></div>
  <!-- tray -->
  <svg class="a" style="left:1181px;top:16px" width="13" height="8"><path d="M1 7L6.5 1.5L12 7" fill="none" stroke="#fff" stroke-width="1.2"/></svg>
  <svg class="a" style="left:1203px;top:12px" width="17" height="15"><path d="M3 0V3M6 0V3M1.5 3H7.5V6Q7.5 8 4.5 8Q1.5 8 1.5 6ZM4.5 8V13" fill="none" stroke="#fff" stroke-width="1.1"/><rect x="6" y="5" width="10" height="7" fill="none" stroke="#fff" stroke-width="1.1"/><rect x="6.5" y="5.5" width="7" height="6" fill="#fff"/></svg>
  <svg class="a" style="left:1227px;top:11px" width="17" height="16"><path d="M1 5H4L8 1V15L4 11H1Z" fill="none" stroke="#fff" stroke-width="1.1"/><path d="M10.5 5Q12 8 10.5 11M12.5 3Q15 8 12.5 13M14.5 1Q18 8 14.5 15" fill="none" stroke="#fff" stroke-width="1.1"/></svg>
  <div class="a t" style="left:1267px;top:4.5px;font-size:12px;letter-spacing:-0.9px">14:38</div>
  <div class="a t" style="left:1254px;top:22px;font-size:12px;letter-spacing:-0.75px">10.12.2020</div>
  <svg class="a" style="left:1324px;top:11px" width="26" height="22" viewBox="0 0 26 22"><path d="M1 1H17V13H8L5 16V13H1Z" fill="#fff"/><path d="M4 4.5H14M4 7H14M4 9.5H14" stroke="#1c2c48" stroke-width="1"/><circle cx="17.5" cy="15" r="6.3" fill="#2a2f3a" stroke="#888" stroke-width="0.8"/><text x="17.5" y="19" font-size="10" fill="#fff" text-anchor="middle" font-family="Liberation Sans" font-weight="bold">2</text></svg>
  <div class="a" style="left:1361px;top:0;width:1px;height:40px;background:#5a6a80"></div>
</div>
</body></html>
